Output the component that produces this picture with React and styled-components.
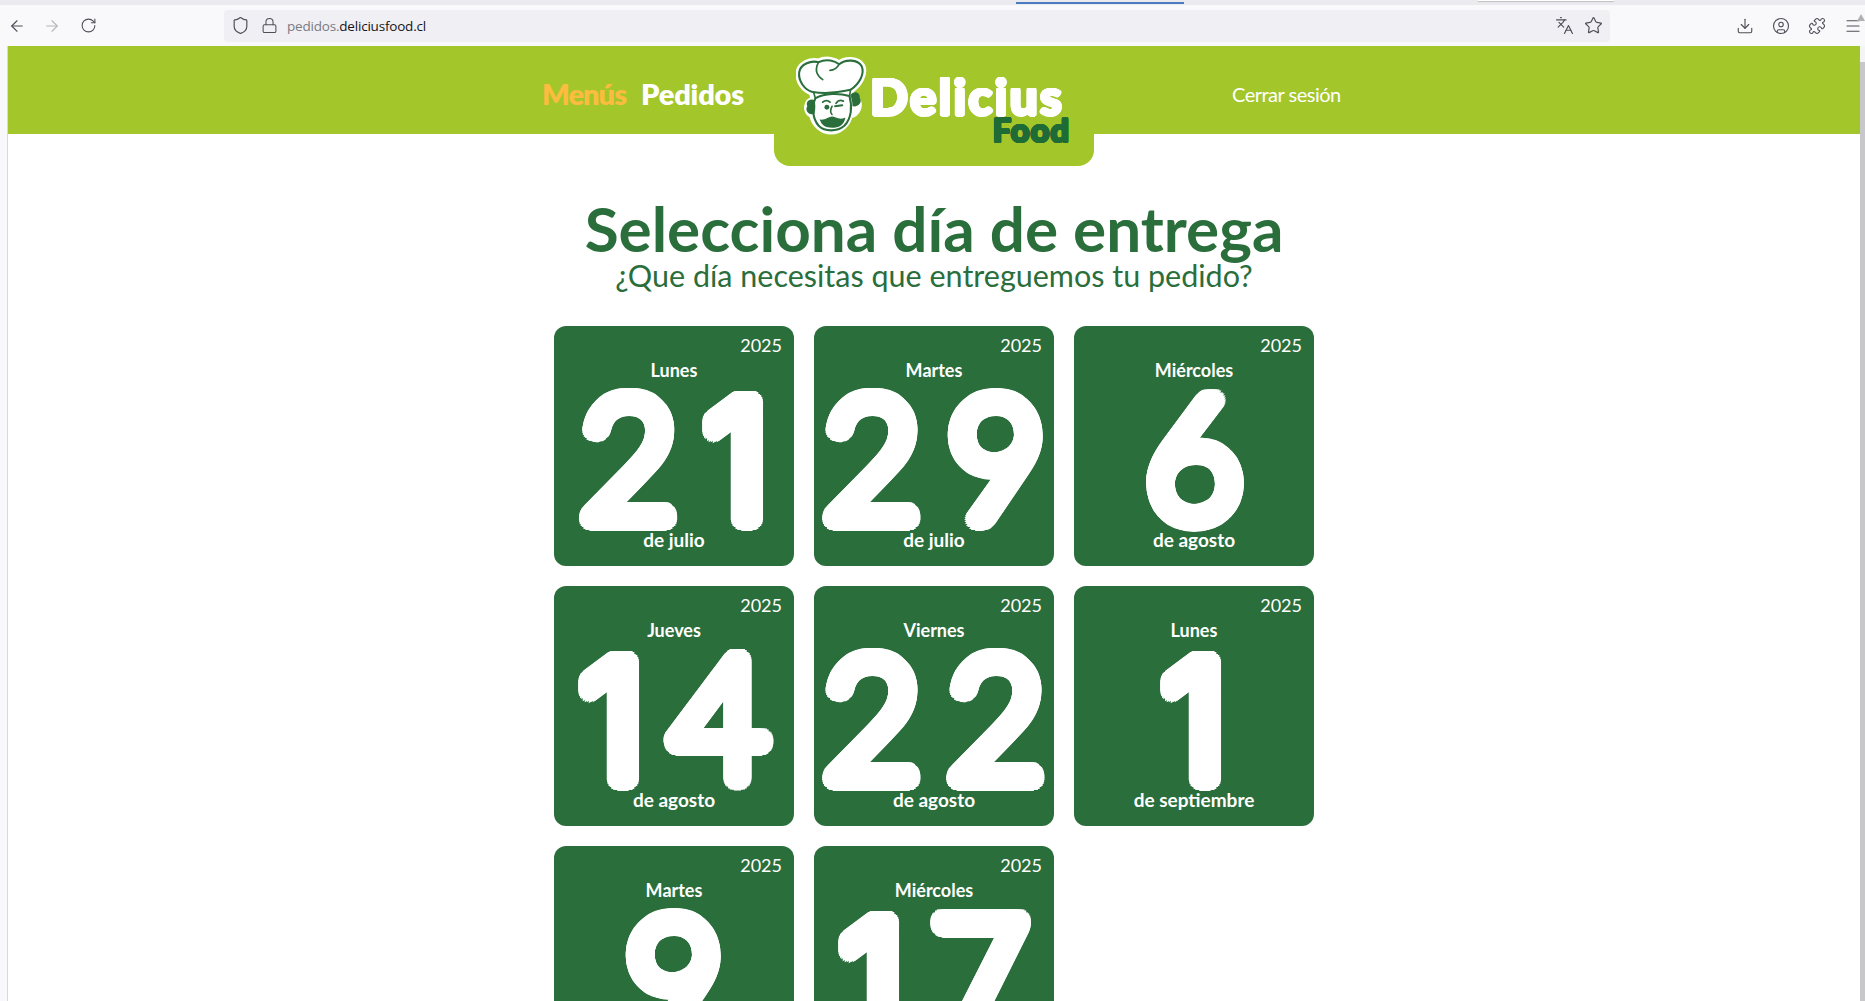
import React from "react";
import styled, { createGlobalStyle } from "styled-components";
import {
  ArrowLeft,
  ArrowRight,
  RotateCw,
  Shield,
  Lock,
  Languages,
  Star,
  Download,
  CircleUser,
  Puzzle,
  Menu,
} from "lucide-react";

const GREEN = "#2a6e3c";
const LIME = "#a3c62a";

// round dilation of the glyphs, gives thin type the fat rounded look
const ring = (radius, color, steps = 32) => {
  const out = [];
  [radius, radius * 0.55].forEach((r) => {
    for (let i = 0; i < steps; i++) {
      const a = (i / steps) * Math.PI * 2;
      out.push(
        `${(Math.cos(a) * r).toFixed(2)}px ${(Math.sin(a) * r).toFixed(2)}px 0 ${color}`
      );
    }
  });
  return out.join(",");
};

const GlobalStyle = createGlobalStyle`
  html, body {
    margin: 0;
    padding: 0;
    height: 100%;
    overflow: hidden;
    background: #fff;
  }
  * {
    box-sizing: border-box;
  }
`;

const Window = styled.div`
  height: 1001px;
  display: flex;
  flex-direction: column;
  overflow: hidden;
  font-family: "Lato", "Liberation Sans", sans-serif;
`;

const TabStrip = styled.div`
  height: 5px;
  flex: none;
  display: flex;
  background: #ebebef;
`;

const ActiveTab = styled.div`
  width: 168px;
  height: 2px;
  margin: 2px 0 0 1016px;
  background: #4a7cc4;
`;

const OtherTab = styled.div`
  width: 136px;
  height: 1px;
  margin-left: 294px;
  background: #fff;
  box-shadow: 0 1px 1px #bbb;
`;

const Toolbar = styled.div`
  height: 41px;
  flex: none;
  display: flex;
  align-items: center;
  background: #f9f9fb;
  color: #4f4f59;
  font-family: "Open Sans", "Liberation Sans", sans-serif;
`;

const NavButtons = styled.div`
  width: 224px;
  flex: none;
  display: flex;
  align-items: center;
  gap: 17px;
  padding-left: 8px;
`;

const Faded = styled.span`
  display: flex;
  margin-right: 2px;
  color: #b5b5bb;
`;

const UrlBar = styled.div`
  width: 1386px;
  height: 32px;
  flex: none;
  display: flex;
  align-items: center;
  padding: 0 7px;
  border-radius: 4px;
  background: #f0f0f4;
`;

const UrlIcons = styled.div`
  display: flex;
  align-items: center;
  gap: 11px;
`;

const UrlText = styled.div`
  flex: 1;
  margin-left: 9px;
  font-size: 13.5px;
  letter-spacing: -0.2px;
  color: #15141a;
`;

const UrlHost = styled.span`
  color: #7a7a83;
`;

const ToolIcons = styled.div`
  flex: none;
  display: flex;
  align-items: center;
  gap: 10px;
`;

const RightIcons = styled.div`
  flex: 1;
  display: flex;
  justify-content: flex-end;
  align-items: center;
  gap: 18px;
  padding-right: 3px;
`;

const MenuWrap = styled.span`
  display: flex;
  position: relative;
`;

const MenuBadge = styled.span`
  position: absolute;
  top: -3px;
  right: -3px;
  width: 0;
  height: 0;
  border-left: 4px solid transparent;
  border-right: 4px solid transparent;
  border-bottom: 7px solid #b0b0b6;
`;

const PageRow = styled.div`
  flex: 1;
  min-height: 0;
  display: flex;
`;

const Gutter = styled.div`
  width: 8px;
  flex: none;
  background: #f9f9fb;
  border-right: 1px solid #d9d9dd;
`;

const Page = styled.div`
  flex: 1;
  min-width: 0;
  background: #fff;
`;

const Scrollbar = styled.div`
  width: 5px;
  flex: none;
  padding-top: 16px;
  background: #f4f4f6;
`;

const ScrollThumb = styled.div`
  height: 100%;
  background: #c8c8cc;
`;

const Header = styled.header`
  height: 88px;
  display: grid;
  grid-template-columns: 1fr 320px 1fr;
  background: ${LIME};
`;

const MainNav = styled.nav`
  display: flex;
  justify-content: flex-end;
  align-items: center;
  gap: 15px;
  padding: 0 30px 26px 0;
`;

const NavLink = styled.a`
  font-size: 29px;
  font-weight: 800;
  letter-spacing: ${(props) => (props.$active ? "-1px" : "-0.2px")};
  color: ${(props) => (props.$active ? "#fbbc3f" : "#fff")};
`;

const LogoTab = styled.div`
  height: 120px;
  display: flex;
  padding: 9px 0 0 22px;
  border-radius: 0 0 16px 16px;
  background: ${LIME};
  position: relative;
`;

const Wordmark = styled.div`
  display: flex;
  flex-direction: column;
  align-items: flex-end;
  margin-left: 2px;
`;

const Delicius = styled.div`
  margin-top: 16px;
  font-size: 50px;
  font-weight: 900;
  line-height: 50px;
  letter-spacing: 2px;
  color: #fff;
  text-shadow: ${ring(1.5, "#fff", 12)};
`;

const Food = styled.div`
  margin: -8px -6px 0 0;
  font-size: 33px;
  font-weight: 900;
  line-height: 33px;
  letter-spacing: 0.8px;
  color: #1f6b36;
  text-shadow: ${ring(1, "#1f6b36", 12)};
`;

const Session = styled.div`
  display: flex;
  align-items: center;
  padding: 0 0 24px 138px;
`;

const SessionLink = styled.a`
  font-size: 20px;
  letter-spacing: -0.5px;
  color: #fff;
`;

const Main = styled.main`
  display: flex;
  flex-direction: column;
  align-items: center;
`;

const Title = styled.h1`
  margin: 59px 0 0;
  font-size: 62px;
  font-weight: 700;
  line-height: 70px;
  color: ${GREEN};
`;

const Subtitle = styled.h2`
  margin: -6px 0 0;
  font-size: 30.5px;
  font-weight: 400;
  line-height: 36px;
  color: ${GREEN};
`;

const DayGrid = styled.div`
  display: grid;
  grid-template-columns: repeat(3, 240px);
  gap: 20px;
  margin-top: 33px;
`;

const Card = styled.div`
  height: 240px;
  display: flex;
  flex-direction: column;
  align-items: center;
  padding-top: 9px;
  border-radius: 12px;
  background: ${GREEN};
  color: #fff;
`;

const Year = styled.div`
  align-self: flex-end;
  padding-right: 12px;
  font-size: 18px;
  font-weight: 400;
  line-height: 20px;
`;

const Weekday = styled.div`
  margin-top: 4px;
  font-size: 18px;
  font-weight: 700;
  line-height: 22px;
`;

const DayNumber = styled.div`
  height: 148px;
  font-size: 169px;
  font-weight: 300;
  line-height: 148px;
  white-space: nowrap;
  text-shadow: ${ring(10.5, "#fff")};
`;

// Lato's one has a foot, the reference's has none
const Digit = styled.span`
  font-family: ${(props) =>
    props.$plain ? '"Inter", "Liberation Sans", sans-serif' : "inherit"};
  font-size: ${(props) => (props.$plain ? "164px" : "inherit")};

  & + & {
    margin-left: 26px;
  }
`;

const Month = styled.div`
  font-size: 19px;
  font-weight: 700;
  line-height: 22px;
  position: relative;
`;

const ChefLogo = () => (
  <svg width="72" height="80" viewBox="0 0 70 78" fill="none">
    <g stroke="#fff" strokeWidth="7" strokeLinejoin="round" fill="#fff">
      <path d="M16 36C8 34 2 25 3 17C4 9 14 5 22 7C30 3 38 6 42 9C48 4 60 4 64 11C67 18 62 28 53 34L54 44C58 42 62 46 60 52C58 57 56 58 52 58C50 68 42 74 34 74C26 74 18 68 16 58C12 57 10 52 12 48C13 45 16 44 18 45Z" />
    </g>
    <path
      d="M16 36C8 34 2 25 3 17C4 9 14 5 22 7C30 3 38 6 42 9C48 4 60 4 64 11C67 18 62 28 53 34C40 37 28 38 16 36Z"
      stroke={GREEN}
      strokeWidth="2"
      fill="#fff"
      strokeLinejoin="round"
    />
    <path d="M22 7C18 14 20 20 26 24M42 9C40 13 36 15 33 15M17 36L19 43M53 34L52 41" stroke={GREEN} strokeWidth="1.6" strokeLinecap="round" />
    <path d="M19 42C28 37 42 37 52 40C55 50 54 62 47 69C40 75 28 75 22 69C16 62 15 50 19 42Z" fill="#fff" stroke={GREEN} strokeWidth="2" />
    <path d="M18 44C13 42 9 46 11 50C8 54 13 60 18 57C19 52 19 48 18 44Z" fill={GREEN} />
    <path d="M53 39C57 34 63 37 62 42C65 46 61 51 55 50C55 46 54 42 53 39Z" fill={GREEN} />
    <path d="M26 46C28 44 31 44 33 46M39 47C41 44 44 44 46 45M38 50L45 49" stroke={GREEN} strokeWidth="1.8" strokeLinecap="round" />
    <circle cx="30" cy="51" r="2.4" fill={GREEN} />
    <path d="M35 50C33 54 33 56 35 58" stroke={GREEN} strokeWidth="1.6" strokeLinecap="round" />
    <path d="M23 63C28 64 32 60 35 60C38 60 42 64 48 61C47 69 41 71 35 71C29 71 25 69 23 63Z" fill={GREEN} />
  </svg>
);

const days = [
  { weekday: "Lunes", day: 21, month: "de julio" },
  { weekday: "Martes", day: 29, month: "de julio" },
  { weekday: "Miércoles", day: 6, month: "de agosto" },
  { weekday: "Jueves", day: 14, month: "de agosto" },
  { weekday: "Viernes", day: 22, month: "de agosto" },
  { weekday: "Lunes", day: 1, month: "de septiembre" },
  { weekday: "Martes", day: 9, month: "de septiembre" },
  { weekday: "Miércoles", day: 17, month: "de septiembre" },
];

const App = () => (
  <>
    <GlobalStyle />
    <Window>
      <TabStrip>
        <ActiveTab />
        <OtherTab />
      </TabStrip>
      <Toolbar>
        <NavButtons>
          <ArrowLeft size={18} strokeWidth={1.5} />
          <Faded>
            <ArrowRight size={18} strokeWidth={1.5} />
          </Faded>
          <RotateCw size={17} strokeWidth={1.5} />
        </NavButtons>
        <UrlBar>
          <UrlIcons>
            <Shield size={19} strokeWidth={1.5} />
            <Lock size={17} strokeWidth={1.5} />
          </UrlIcons>
          <UrlText>
            <UrlHost>pedidos.</UrlHost>deliciusfood.cl
          </UrlText>
          <ToolIcons>
            <Languages size={19} strokeWidth={1.5} />
            <Star size={19} strokeWidth={1.5} />
          </ToolIcons>
        </UrlBar>
        <RightIcons>
          <Download size={18} strokeWidth={1.5} />
          <CircleUser size={18} strokeWidth={1.5} />
          <Puzzle size={18} strokeWidth={1.5} />
          <MenuWrap>
            <Menu size={18} strokeWidth={1.5} />
            <MenuBadge />
          </MenuWrap>
        </RightIcons>
      </Toolbar>
      <PageRow>
        <Gutter />
        <Page>
          <Header>
            <MainNav>
              <NavLink $active>Menús</NavLink>
              <NavLink>Pedidos</NavLink>
            </MainNav>
            <LogoTab>
              <ChefLogo />
              <Wordmark>
                <Delicius>Delicius</Delicius>
                <Food>Food</Food>
              </Wordmark>
            </LogoTab>
            <Session>
              <SessionLink>Cerrar sesión</SessionLink>
            </Session>
          </Header>
          <Main>
            <Title>Selecciona día de entrega</Title>
            <Subtitle>¿Que día necesitas que entreguemos tu pedido?</Subtitle>
            <DayGrid>
              {days.map((item) => (
                <Card key={`${item.day}-${item.month}`}>
                  <Year>2025</Year>
                  <Weekday>{item.weekday}</Weekday>
                  <DayNumber>
                    {String(item.day)
                      .split("")
                      .map((digit, index) => (
                        <Digit key={index} $plain={digit === "1"}>
                          {digit}
                        </Digit>
                      ))}
                  </DayNumber>
                  <Month>{item.month}</Month>
                </Card>
              ))}
            </DayGrid>
          </Main>
        </Page>
        <Scrollbar>
          <ScrollThumb />
        </Scrollbar>
      </PageRow>
    </Window>
  </>
);

export default App;
